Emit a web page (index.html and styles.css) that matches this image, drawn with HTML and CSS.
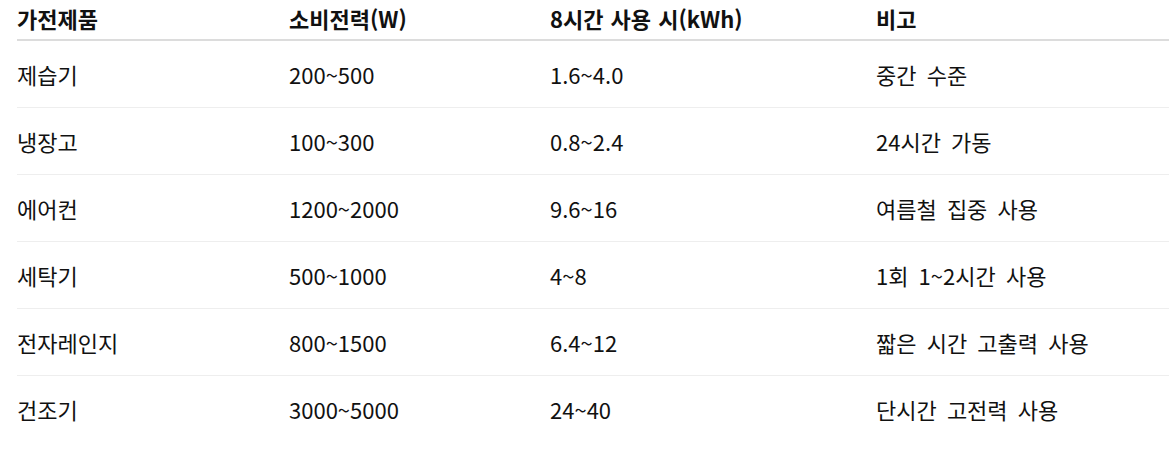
FILE: index.html
```html
<!DOCTYPE html>
<html lang="ko">
<head>
<meta charset="utf-8">
<title>가전제품 소비전력</title>
<link rel="stylesheet" href="styles.css">
</head>
<body>
<table class="power-table">
  <colgroup>
    <col class="c1"><col class="c2"><col class="c3"><col class="c4">
  </colgroup>
  <thead>
    <tr><th>가전제품</th><th>소비전력(W)</th><th>8시간 사용 시(kWh)</th><th>비고</th></tr>
  </thead>
  <tbody>
    <tr><td>제습기</td><td>200~500</td><td>1.6~4.0</td><td>중간 수준</td></tr>
    <tr><td>냉장고</td><td>100~300</td><td>0.8~2.4</td><td>24시간 가동</td></tr>
    <tr><td>에어컨</td><td>1200~2000</td><td>9.6~16</td><td>여름철 집중 사용</td></tr>
    <tr><td>세탁기</td><td>500~1000</td><td>4~8</td><td>1회 1~2시간 사용</td></tr>
    <tr><td>전자레인지</td><td>800~1500</td><td>6.4~12</td><td>짧은 시간 고출력 사용</td></tr>
    <tr><td>건조기</td><td>3000~5000</td><td>24~40</td><td>단시간 고전력 사용</td></tr>
  </tbody>
</table>
</body>
</html>
```

FILE: styles.css
```css
html, body {
  margin: 0;
  padding: 0;
  background: #ffffff;
}
body {
  padding-left: 17px;
  font-family: "Noto Sans CJK KR", "Noto Sans", sans-serif;
  font-size: 22px;
  word-spacing: 4px;
  color: #111111;
}
.power-table {
  width: 100%;
  border-collapse: collapse;
  table-layout: fixed;
}
.c1 { width: 272px; }
.c2 { width: 261px; }
.c3 { width: 326px; }
.power-table th {
  text-align: left;
  font-weight: 700;
  word-spacing: 1px;
  height: 36px;
  padding: 0 0 3px 0;
  vertical-align: middle;
  border-bottom: 2px solid #dcdcdc;
}
.power-table td {
  height: 66px;
  padding: 0;
  vertical-align: middle;
  border-bottom: 1px solid #eeeeee;
}
.power-table tbody tr:last-child td {
  border-bottom: none;
}
```
